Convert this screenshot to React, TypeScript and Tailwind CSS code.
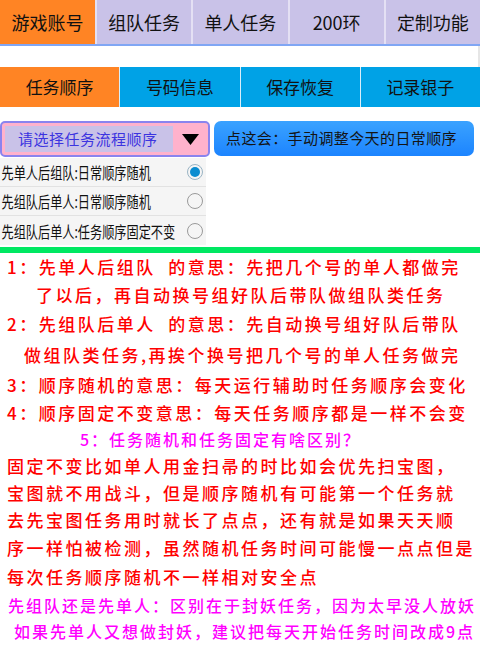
import React from 'react';

const topTabs = ['游戏账号', '组队任务', '单人任务', '200环', '定制功能'];
const subTabs = ['任务顺序', '号码信息', '保存恢复', '记录银子'];
const options = ['先单人后组队:日常顺序随机', '先组队后单人:日常顺序随机', '先组队后单人:任务顺序固定不变'];

const cjk = { fontFamily: '"Noto Sans CJK SC", "Noto Sans", sans-serif' };

type Line = { text: string; h: number; pl: number; magenta?: boolean };

const lines: Line[] = [
  { text: '1：先单人后组队  的意思：先把几个号的单人都做完', h: 28, pl: 7 },
  { text: '了以后，再自动换号组好队后带队做组队类任务', h: 28, pl: 36 },
  { text: '2：先组队后单人  的意思：先自动换号组好队后带队', h: 30, pl: 7 },
  { text: '做组队类任务,再挨个换号把几个号的单人任务做完', h: 31, pl: 24 },
  { text: '3：顺序随机的意思：每天运行辅助时任务顺序会变化', h: 29, pl: 7 },
  { text: '4：顺序固定不变意思：每天任务顺序都是一样不会变', h: 27, pl: 7 },
  { text: '5：任务随机和任务固定有啥区别？', h: 26, pl: 80, magenta: true },
  { text: '固定不变比如单人用金扫帚的时比如会优先扫宝图，', h: 27, pl: 7 },
  { text: '宝图就不用战斗，但是顺序随机有可能第一个任务就', h: 27, pl: 7 },
  { text: '去先宝图任务用时就长了点点，还有就是如果天天顺', h: 28, pl: 7 },
  { text: '序一样怕被检测，虽然随机任务时间可能慢一点点但是', h: 28, pl: 7 },
  { text: '每次任务顺序随机不一样相对安全点', h: 29, pl: 7 },
  { text: '先组队还是先单人：区别在于封妖任务，因为太早没人放妖', h: 27, pl: 8, magenta: true },
  { text: '如果先单人又想做封妖，建议把每天开始任务时间改成9点', h: 25, pl: 14, magenta: true },
];

export default function App() {
  return (
    <div className="w-[480px] h-[655px] overflow-hidden bg-white" style={cjk}>
      {/* top tabs */}
      <div className="flex h-[44px]">
        {topTabs.map((t, i) => (
          <div
            key={t}
            className={`flex items-center justify-center text-[18px] text-[#111] border-r-2 border-[#e4e0f4] last:border-r-0 ${
              i === 0 ? 'bg-[#ff8424] w-[97px]' : 'bg-[#c9c2e8] flex-1'
            }`}
          >
            {t}
          </div>
        ))}
      </div>
      <div className="h-[2px] bg-[#80a6f4]" />
      <div className="h-[21px] border-r-2 border-[#e6e6e6]" />

      {/* sub tabs */}
      <div className="flex h-[40px]">
        {subTabs.map((t, i) => (
          <div
            key={t}
            className={`flex-1 flex items-center justify-center text-[17px] text-[#111] border-l border-[#d8eefa] first:border-l-0 ${
              i === 0 ? 'bg-[#ff8424]' : 'bg-[#00a2e6]'
            }`}
          >
            {t}
          </div>
        ))}
      </div>

      {/* dropdown and button */}
      <div className="flex gap-[4px] pt-[14px]">
        <div className="w-[210px] h-[36px] rounded-[5px] border-2 border-[#8a84ee] bg-[#ffb2cc] flex items-center pl-[3px]">
          <div className="w-[168px] h-[26px] bg-[#c9c2e8] flex items-center pl-[13px] text-[15px] text-[#3c34e0] tracking-[0.5px]">
            请选择任务流程顺序
          </div>
          <div className="flex-1 flex justify-center">
            <svg width="17" height="11" viewBox="0 0 17 11">
              <polygon points="0,0 17,0 8.5,11" fill="#000" />
            </svg>
          </div>
        </div>
        <div className="w-[260px] h-[35px] rounded-[7px] bg-gradient-to-b from-[#3aa2ff] to-[#1c84ff] flex items-center pl-[12px] text-[15px] text-[#141414] tracking-[0.4px]">
          点这会：手动调整今天的日常顺序
        </div>
      </div>

      {/* radio list */}
      <div className="w-[206px] bg-[#f5f5f5] mt-[1px]">
        {options.map((o, i) => (
          <div
            key={o}
            className={`h-[29px] flex items-center pr-[3px] ${i < 2 ? 'border-b border-[#e2e2e2]' : ''}`}
          >
            <div className="flex-1 min-w-0">
              <span className="inline-block origin-left scale-x-[0.76] whitespace-nowrap text-[16px] text-[#111] pl-[2px]">
                {o}
              </span>
            </div>
            <span
              className={`w-[16px] h-[16px] rounded-full border-[1.5px] flex items-center justify-center shrink-0 ${
                i === 0 ? 'border-[#9ab4c4]' : 'border-[#9a9a9a]'
              }`}
            >
              {i === 0 && <span className="w-[10px] h-[10px] rounded-full bg-[#0a8cd0]" />}
            </span>
          </div>
        ))}
      </div>

      <div className="h-[6px] mt-[2px] bg-[#00e862]" />

      {/* explanation text */}
      <div>
        {lines.map((l, i) => (
          <div
            key={i}
            className={`flex items-center whitespace-pre overflow-hidden font-medium ${
              l.magenta ? 'text-[#ff00ff] text-[16px] tracking-[2px]' : 'text-[#ff0000] text-[17px] tracking-[2.5px]'
            }`}
            style={{ height: l.h, paddingLeft: l.pl }}
          >
            {l.text}
          </div>
        ))}
      </div>
    </div>
  );
}
